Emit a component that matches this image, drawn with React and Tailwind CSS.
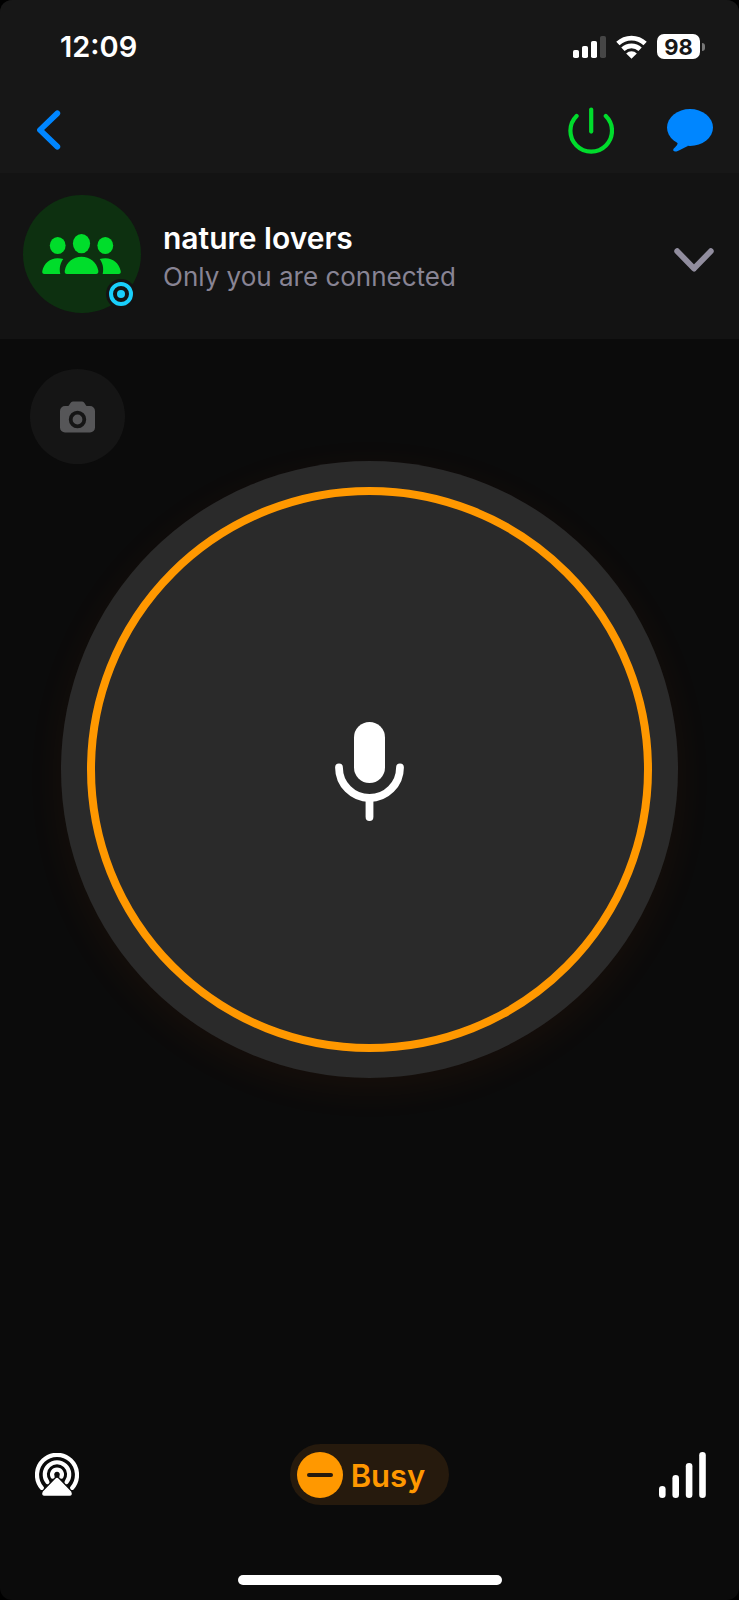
import React from "react";

function StatusBar() {
  return (
    <div className="flex h-[93px] items-center justify-between pr-[34px] pl-[60px]">
      <time className="text-[29px] leading-9 font-semibold">12:09</time>
      <div className="flex items-center gap-[10px]">
        <svg className="h-[22px] w-[33px]" viewBox="0 0 33 22" fill="#fff" aria-label="Cellular signal">
          <rect x="0" y="14" width="6" height="8" rx="1.8" />
          <rect x="9" y="10" width="6" height="12" rx="1.8" />
          <rect x="18" y="5" width="6" height="17" rx="1.8" />
          <rect x="27" y="0" width="6" height="22" rx="1.8" fill="#464646" />
        </svg>
        <svg className="h-6 w-[31px]" viewBox="0 0 31 24" fill="none" stroke="#fff" strokeWidth="4.8" aria-label="Wi-Fi">
          <path d="M1.9 8.6A19.8 19.8 0 0 1 29.1 8.6" />
          <path d="M6.9 14.2A12.6 12.6 0 0 1 24.1 14.2" />
          <path d="M15.5 23.8 10.2 18.6A7.4 7.4 0 0 1 20.8 18.6Z" fill="#fff" stroke="none" />
        </svg>
        <div className="flex items-center gap-[2px]">
          <div className="flex h-[25px] w-[43px] items-center justify-center rounded-[7px] bg-white text-[22px] leading-6 font-bold text-[#171717]">98</div>
          <div className="h-2 w-[3px] rounded-r-full bg-[#777]" />
        </div>
      </div>
    </div>
  );
}

function NavBar() {
  return (
    <nav className="flex h-20 items-center justify-between pr-[26px] pb-[6px] pl-[37px]">
      <button type="button" aria-label="Back">
        <svg className="h-10 w-6" viewBox="0 0 24 40" fill="none" stroke="#0086ff" strokeWidth="5.8" strokeLinecap="round" strokeLinejoin="round">
          <path d="M20.3 3.3 3 20 20.3 36.7" />
        </svg>
      </button>
      <div className="flex items-center gap-[53px]">
        <button type="button" aria-label="Power">
          <svg className="h-[47px] w-[46px]" viewBox="0 0 46 47" fill="none" stroke="#00dc2c" strokeWidth="4.2" strokeLinecap="round">
            <path d="M8.6 9A20.8 20.8 0 1 0 37.8 9" />
            <path d="M23.2 2.6V24.6" />
          </svg>
        </button>
        <button type="button" aria-label="Messages">
          <svg className="h-[43px] w-[46px]" viewBox="0 0 46 43" fill="#0086ff">
            <ellipse cx="23" cy="18.5" rx="23" ry="18.5" />
            <path d="M10 32C12 35.6 8.4 37.6 6.6 39.8C5.5 41.6 6.8 43 9.5 42.4C13.6 41.2 17 38.4 21.5 36.8Z" />
          </svg>
        </button>
      </div>
    </nav>
  );
}

function GroupAvatar() {
  return (
    <div className="relative flex size-[118px] shrink-0 items-center justify-center rounded-full bg-[#0d3010]">
      <svg className="mr-[2px] h-10 w-[79px]" viewBox="0 0 79 40" fill="#00dd2b" aria-hidden="true">
        <ellipse cx="39.5" cy="9.6" rx="8.6" ry="9.6" />
        <ellipse cx="15.7" cy="11.5" rx="7.9" ry="8.6" />
        <ellipse cx="63.3" cy="11.5" rx="7.9" ry="8.6" />
        <path d="M25 40C23 40 22.4 38.6 22.8 36.6C24.4 28 31 22.7 39.5 22.7S54.6 28 56.3 36.6C56.6 38.6 56 40 54 40Z" />
        <path d="M2.4 40C.6 40 0 38.8.3 37C2 29.2 8 24.2 15.5 24.2C17.8 24.2 19.7 24.5 21.3 25.1C18.3 29 17 34.5 18.3 40Z" />
        <path d="M76.6 40C78.4 40 79 38.8 78.7 37C77 29.2 71 24.2 63.5 24.2C61.2 24.2 59.3 24.5 57.7 25.1C60.7 29 62 34.5 60.7 40Z" />
      </svg>
      <span className="absolute right-[5px] bottom-1 flex size-[30px] items-center justify-center rounded-full bg-[#131313]">
        <span className="flex size-6 items-center justify-center rounded-full border-4 border-[#19cffc]">
          <span className="size-2 rounded-full bg-[#19cffc]" />
        </span>
      </span>
    </div>
  );
}

function ChannelHeader() {
  return (
    <section className="flex items-center gap-[22px] bg-[#131313] pt-[22px] pr-[25px] pb-[26px] pl-[23px]">
      <GroupAvatar />
      <div className="min-w-0 flex-1 pt-[5px]">
        <h1 className="text-[30px] leading-10 font-semibold">nature lovers</h1>
        <p className="text-[26px] leading-[38px] text-[#888494]">Only you are connected</p>
      </div>
      <button type="button" aria-label="Show details" className="mt-3">
        <svg className="h-6 w-10" viewBox="0 0 40 24" fill="none" stroke="#918d9e" strokeWidth="5.8" strokeLinecap="round" strokeLinejoin="round">
          <path d="M3.2 3.2 20 20.6 36.8 3.2" />
        </svg>
      </button>
    </section>
  );
}

function TalkArea() {
  return (
    <main className="flex flex-1 flex-col">
      <button type="button" aria-label="Take a photo" className="mt-[30px] ml-[30px] flex size-[95px] items-center justify-center rounded-full bg-[#151515]">
        <svg className="h-8 w-[35px]" viewBox="0 0 35 32" aria-hidden="true">
          <path d="M5 5H8.2C9.6 5 10 .5 13 .5H22C25 .5 25.4 5 26.8 5H30A5 5 0 0 1 35 10V26.5A5 5 0 0 1 30 31.5H5A5 5 0 0 1 0 26.5V10A5 5 0 0 1 5 5Z" fill="#565658" />
          <circle cx="17.5" cy="18.5" r="6.8" fill="#565658" stroke="#151515" strokeWidth="3.8" />
        </svg>
      </button>
      <button type="button" aria-label="Push to talk" className="mx-[61px] -mt-[3px] flex aspect-square rounded-full bg-[#2a2a2a] p-[26px] shadow-[0_10px_40px_rgba(255,110,0,0.06)]">
        <span className="flex flex-1 items-center justify-center self-stretch rounded-full border-8 border-[#ff9800]">
          <svg className="mt-1 h-[99px] w-[69px]" viewBox="0 0 69 99" fill="none" stroke="#fff" strokeWidth="7.8" strokeLinecap="round" aria-hidden="true">
            <rect x="19" y="0" width="31" height="61" rx="15.5" fill="#fff" stroke="none" />
            <path d="M4 45.5A30.5 30.5 0 0 0 65 45.5" />
            <path d="M34.5 77V95" />
          </svg>
        </span>
      </button>
    </main>
  );
}

function BottomBar() {
  return (
    <footer>
      <div className="grid grid-cols-3 items-center px-[33px]">
        <button type="button" aria-label="Audio output" className="ml-[2px] justify-self-start">
          <svg className="h-11 w-11" viewBox="0 0 44 44" fill="none" stroke="#fff" strokeWidth="4.2" strokeLinecap="round">
            <path d="M6.8 34.8A20 20 0 1 1 37.2 34.8" />
            <path d="M12.4 29A12.2 12.2 0 1 1 31.6 29" />
            <path d="M17.6 23.6A4.9 4.9 0 1 1 26.4 23.6" />
            <path d="M20.8 26.2Q22 25 23.2 26.2L35.6 39Q37 42 34.6 42H9.4Q7 42 8.4 39Z" fill="#fff" strokeWidth="1.4" strokeLinejoin="round" />
          </svg>
        </button>
        <button type="button" className="flex h-[61px] items-center gap-2 justify-self-center rounded-full bg-[#261a0d] pr-6 pl-[7px] text-[#ff9800]">
          <span className="flex size-[46px] items-center justify-center rounded-full bg-[#ff9800]">
            <span className="h-[4px] w-[26px] rounded-full bg-[#261a0d]" />
          </span>
          <span className="pt-[2px] text-[31px] leading-10 font-semibold">Busy</span>
        </button>
        <button type="button" aria-label="Connection quality" className="justify-self-end">
          <svg className="h-[46px] w-[47px]" viewBox="0 0 47 46" fill="#fff">
            <rect x="0" y="34" width="6.6" height="12" rx="3.3" />
            <rect x="13.4" y="23" width="6.6" height="23" rx="3.3" />
            <rect x="26.8" y="11" width="6.6" height="35" rx="3.3" />
            <rect x="40.2" y="0" width="6.6" height="46" rx="3.3" />
          </svg>
        </button>
      </div>
      <div className="mx-auto mt-[70px] mb-[15px] h-[10px] w-[264px] rounded-full bg-white" />
    </footer>
  );
}

export default function App() {
  return (
    <div className="flex min-h-screen flex-col bg-black font-['Inter','Liberation_Sans',sans-serif] text-white">
      <div className="flex flex-1 flex-col overflow-hidden rounded-xl bg-[#0b0b0b]">
        <header className="bg-[#171717]">
          <StatusBar />
          <NavBar />
        </header>
        <ChannelHeader />
        <TalkArea />
        <BottomBar />
      </div>
    </div>
  );
}
